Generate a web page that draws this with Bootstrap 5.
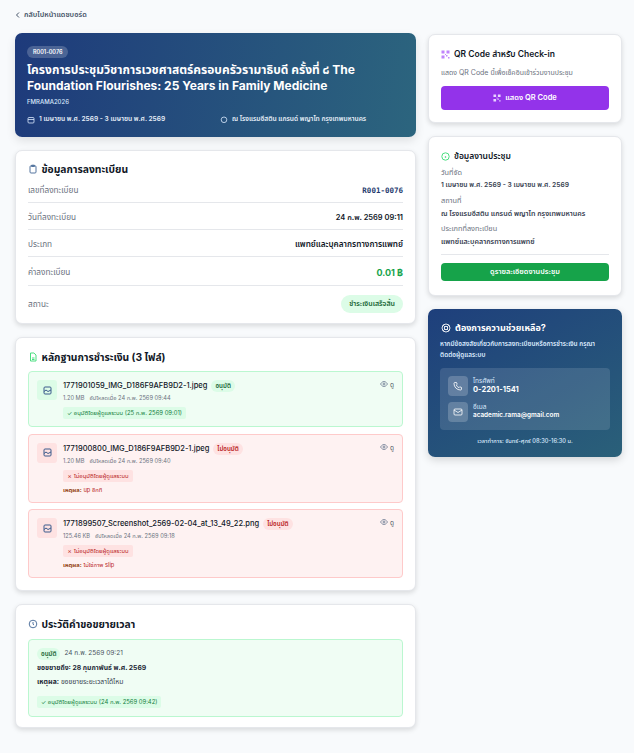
<!DOCTYPE html>
<html lang="th">
<head>
    <meta charset="UTF-8">
    <meta name="viewport" content="width=device-width, initial-scale=1.0">
    <title>Registration</title>
    <link href="https://cdn.jsdelivr.net/npm/bootstrap@5.3.3/dist/css/bootstrap.min.css" rel="stylesheet" crossorigin="anonymous">
    <script src="https://cdn.jsdelivr.net/npm/bootstrap@5.3.3/dist/js/bootstrap.bundle.min.js" crossorigin="anonymous"></script>
    <style>
        body { background: #f8fafc; font-family: "Inter", "Noto Sans Thai", "Noto Sans", sans-serif; color: #111827; font-size: 8px; height: 753px; overflow: hidden; }
        .page-wrap { padding: 4px 11px 0 15px; }
        .back-link { font-size: 7.3px; font-weight: 600; color: #475569; height: 22px; gap: 4px; margin-bottom: 7px; }
        .left-col { width: 401px; flex: none; }
        .right-col { width: 194px; flex: none; padding-top: 1px; }
        .columns { gap: 12px; }
        .stack-l { gap: 13px; }
        .stack-r { gap: 13px; }
        .hero { height: 104px; border-radius: 7px; background: linear-gradient(100deg, #1e3a7b, #2c657e); color: #fff; padding: 12px 12px; box-shadow: 0 4px 10px rgba(0,0,0,.1); }
        .hero-tag { background: rgba(255,255,255,.2); border-radius: 8px; font-size: 5.5px; font-weight: 600; padding: 0 6px; height: 12px; display: inline-flex; align-items: center; }
        .hero-title { font-size: 12px; font-weight: 700; line-height: 16px; margin: 4px 0 3px; }
        .hero-code { font-size: 6px; font-weight: 500; color: #dbeafe; margin-bottom: 9px; }
        .hero-meta { font-size: 6.6px; font-weight: 600; color: #e5edf7; }
        .hero-meta > div { gap: 4px; }
        .hero-meta > div:first-child { width: 193px; }
        .panel { background: #fff; border: 1px solid #e5e7eb; border-radius: 7px; box-shadow: 0 2px 5px rgba(0,0,0,.13); }
        .panel-reg { height: 174px; padding: 11px 12px; }
        .panel-files { height: 254px; padding: 12px 12px; }
        .panel-hist { height: 124px; padding: 12px; }
        .sec-title { font-size: 10.3px; font-weight: 700; gap: 3.5px; color: #111827; line-height: 14px; }
        .info-row { border-bottom: 1px solid #e5e7eb; font-size: 8.2px; color: #6b7280; height: 27px; padding-top: 3px; }
        .info-row.row-fee { height: 29px; }
        .info-row:last-child { border: 0; height: 36px; padding-top: 0; }
        .info-row strong { color: #111827; font-weight: 600; }
        .info-row .date-val { font-size: 7.5px; }
        .mono-val { font-family: "DejaVu Sans Mono", monospace; font-size: 7.5px; color: #1e3a6e; font-weight: 700; }
        .info-row .fee-val { color: #16a34a; font-size: 9px; font-weight: 700; }
        .paid-pill { background: #dcfce7; color: #166534; font-size: 7px; font-weight: 600; border-radius: 9px; padding: 0 8px; height: 18px; display: inline-flex; align-items: center; }
        .file-head { margin-bottom: 7px; }
        .file-stack { gap: 6.5px; }
        .file-box { border-radius: 4px; border: 1px solid; padding: 8px 8px 7px 8px; gap: 6px; }
        .file-ok { background: #f0fdf4; border-color: #bbf7d0; }
        .file-bad { background: #fef2f2; border-color: #fecaca; }
        .file-thumb { width: 20px; height: 20px; flex: none; border-radius: 3px; display: flex; align-items: center; justify-content: center; }
        .file-ok .file-thumb { background: #dcfce7; }
        .file-bad .file-thumb { background: #fee2e2; }
        .file-name { font-size: 7.5px; font-weight: 500; color: #111827; line-height: 12px; }
        .state-pill { font-size: 6.2px; font-weight: 600; border-radius: 6px; padding: 0 4px; height: 12px; display: inline-flex; align-items: center; margin-left: 4px; }
        .pill-ok { background: #dcfce7; color: #166534; }
        .pill-bad { background: #fee2e2; color: #b91c1c; }
        .file-sub { font-size: 5.7px; color: #6b7280; margin-top: 2px; gap: 5px; line-height: 8px; }
        .review-tag { display: block; width: fit-content; font-size: 5.9px; line-height: 8px; border-radius: 2px; padding: 2px 4px; margin-top: 5px; }
        .tag-ok { background: #dcfce7; color: #15803d; }
        .tag-bad { background: #fee2e2; color: #b91c1c; }
        .reason-line { font-size: 5.8px; line-height: 8px; color: #b91c1c; margin: 4px 0 1px; }
        .reason-line b { color: #92400e; }
        .view-link { font-size: 6.5px; color: #4b5563; gap: 2px; line-height: 10px; }
        .hist-box { background: #f0fdf4; border: 1px solid #bbf7d0; border-radius: 4px; padding: 8px 8px; height: 78px; }
        .hist-date { font-size: 6.5px; color: #4b5563; margin-left: 4px; }
        .hist-line { font-size: 6.8px; color: #374151; margin-top: 6px; line-height: 8px; }
        .hist-line.first-line { margin-top: 4px; }
        .hist-line b { font-weight: 700; color: #1f2937; }
        .hist-box .review-tag { margin-top: 10px; }
        .panel-qr { height: 89px; padding: 13px 12px; }
        .panel-event { height: 160px; padding: 13px 12px; }
        .side-title { font-size: 8.5px; font-weight: 600; gap: 4px; line-height: 12px; }
        .qr-hint { font-size: 7px; color: #6b7280; margin: 8px 0 9px; line-height: 9px; }
        .btn-qr { background: #9333ea; color: #fff; font-size: 7.5px; font-weight: 600; height: 24px; border-radius: 4px; border: 0; padding: 0; gap: 4px; width: 100%; display: flex; align-items: center; justify-content: center; }
        .ev-label { font-size: 7.3px; color: #6b7280; margin-top: 6px; line-height: 9px; }
        .ev-val { font-size: 7.1px; font-weight: 600; color: #374151; margin-top: 4px; line-height: 9px; }
        .ev-val.date-val { font-size: 6.7px; }
        .ev-rule { border-top: 1px solid #e5e7eb; margin: 8px 0 8px; }
        .btn-detail { background: #16a34a; color: #fff; font-size: 7.3px; font-weight: 600; height: 18px; border-radius: 4px; border: 0; padding: 0; width: 100%; }
        .help-card { height: 148px; border-radius: 7px; background: linear-gradient(150deg, #1e3f7c, #2a6079); color: #fff; padding: 12px; box-shadow: 0 3px 8px rgba(0,0,0,.15); }
        .help-title { font-size: 9px; font-weight: 700; gap: 4px; line-height: 13px; padding-left: 1px; }
        .help-text { font-size: 6.4px; font-weight: 600; color: #dbeafe; margin: 5px 0 8px; line-height: 10.5px; }
        .contact-box { background: rgba(255,255,255,.12); border-radius: 4px; padding: 8px; height: 62px; gap: 6px; }
        .contact-row { gap: 5px; }
        .contact-icon { width: 20px; height: 20px; border-radius: 4px; background: rgba(255,255,255,.2); flex: none; display: flex; align-items: center; justify-content: center; }
        .contact-label { font-size: 6.5px; color: #dbeafe; line-height: 7px; }
        .contact-val { font-weight: 700; font-size: 7.5px; line-height: 10px; }
        .contact-mail { font-weight: 600; font-size: 6.4px; line-height: 9px; }
        .help-hours { font-size: 5.7px; font-weight: 500; color: #dbeafe; text-align: center; margin-top: 7px; }
    </style>
</head>
<body>
<div class="page-wrap">
    <div class="back-link d-flex align-items-center">
        <svg width="5" height="6" viewBox="0 0 5 6" fill="none" stroke="#475569" stroke-width="1"><path d="M4 .5 1.5 3 4 5.5"/></svg>
        <span>กลับไปหน้าแดชบอร์ด</span>
    </div>

    <div class="columns d-flex">
        <div class="left-col d-flex flex-column stack-l">
            <div class="hero">
                <span class="hero-tag">R001-0076</span>
                <div class="hero-title">โครงการประชุมวิชาการเวชศาสตร์ครอบครัวรามาธิบดี ครั้งที่ ๘ The Foundation Flourishes: 25 Years in Family Medicine</div>
                <div class="hero-code">FMRAMA2026</div>
                <div class="hero-meta d-flex">
                    <div class="d-flex align-items-center">
                        <svg width="8" height="8" viewBox="0 0 8 8" fill="none" stroke="#dbeafe" stroke-width=".8"><rect x="1" y="1.5" width="6" height="5.5" rx="1"/><path d="M1 3.5h6"/></svg>
                        <span>1 เมษายน พ.ศ. 2569 - 3 เมษายน พ.ศ. 2569</span>
                    </div>
                    <div class="d-flex align-items-center">
                        <svg width="8" height="8" viewBox="0 0 8 8" fill="none" stroke="#dbeafe" stroke-width=".8"><circle cx="4" cy="3.8" r="2.8"/></svg>
                        <span>ณ โรงแรมอีสติน แกรนด์ พญาไท กรุงเทพมหานคร</span>
                    </div>
                </div>
            </div>

            <div class="panel panel-reg">
                <div class="sec-title d-flex align-items-center">
                    <svg width="10" height="10" viewBox="0 0 10 10" fill="none" stroke="#54759f" stroke-width="1"><rect x="2" y="1.8" width="6" height="7.2" rx="1"/><path d="M3.6 1.2h2.8v1.3H3.6z" fill="#54759f"/></svg>
                    <span>ข้อมูลการลงทะเบียน</span>
                </div>
                <div class="info-row d-flex justify-content-between align-items-center"><span>เลขที่ลงทะเบียน</span><span class="mono-val">R001-0076</span></div>
                <div class="info-row d-flex justify-content-between align-items-center"><span>วันที่ลงทะเบียน</span><strong class="date-val">24 ก.พ. 2569 09:11</strong></div>
                <div class="info-row d-flex justify-content-between align-items-center"><span>ประเภท</span><strong>แพทย์และบุคลากรทางการแพทย์</strong></div>
                <div class="info-row row-fee d-flex justify-content-between align-items-center"><span>ค่าลงทะเบียน</span><strong class="fee-val">0.01 ฿</strong></div>
                <div class="info-row d-flex justify-content-between align-items-center"><span>สถานะ</span><span class="paid-pill">ชำระเงินเสร็จสิ้น</span></div>
            </div>

            <div class="panel panel-files">
                <div class="sec-title d-flex align-items-center file-head">
                    <svg width="10" height="10" viewBox="0 0 10 10" fill="none" stroke="#4ade80" stroke-width="1"><path d="M2.5 1h3.4L8 3v6H2.5z"/><path d="M4 6h2.5M4 7.5h2.5"/></svg>
                    <span>หลักฐานการชำระเงิน (3 ไฟล์)</span>
                </div>
                <div class="d-flex flex-column file-stack" id="file-list"></div>
            </div>

            <div class="panel panel-hist">
                <div class="sec-title d-flex align-items-center mb-2">
                    <svg width="10" height="10" viewBox="0 0 10 10" fill="none" stroke="#54759f" stroke-width="1"><circle cx="5" cy="5" r="3.8"/><path d="M5 3v2.2l1 .8"/></svg>
                    <span>ประวัติคำขอขยายเวลา</span>
                </div>
                <div class="hist-box">
                    <div class="d-flex align-items-center"><span class="state-pill pill-ok m-0">อนุมัติ</span><span class="hist-date">24 ก.พ. 2569 09:21</span></div>
                    <div class="hist-line first-line"><b>ขอขยายถึง: 28 กุมภาพันธ์ พ.ศ. 2569</b></div>
                    <div class="hist-line"><b>เหตุผล:</b> ขอขยายระยะเวลาได้ไหม</div>
                    <span class="review-tag tag-ok">✓ อนุมัติโดยผู้ดูแลระบบ (24 ก.พ. 2569 09:42)</span>
                </div>
            </div>
        </div>

        <div class="right-col d-flex flex-column stack-r">
            <div class="panel panel-qr">
                <div class="side-title d-flex align-items-center">
                    <svg width="9" height="9" viewBox="0 0 9 9" fill="#c084fc"><path d="M.5.5h3v3h-3zM5.5.5h3v3h-3zM.5 5.5h3v3h-3zM5 5h1.5v1.5H5zM7 7h1.5v1.5H7zM4 4h1v1H4z"/></svg>
                    <span>QR Code สำหรับ Check-in</span>
                </div>
                <div class="qr-hint">แสดง QR Code นี้เพื่อเช็คอินเข้าร่วมงานประชุม</div>
                <button class="btn-qr" type="button">
                    <svg width="8" height="8" viewBox="0 0 9 9" fill="#e9d5ff"><path d="M.5.5h3v3h-3zM5.5.5h3v3h-3zM.5 5.5h3v3h-3zM5 5h1.5v1.5H5zM7 7h1.5v1.5H7zM4 4h1v1H4z"/></svg>
                    <span>แสดง QR Code</span>
                </button>
            </div>

            <div class="panel panel-event">
                <div class="side-title d-flex align-items-center">
                    <svg width="9" height="9" viewBox="0 0 9 9" fill="none" stroke="#4ade80" stroke-width="1"><circle cx="4.5" cy="4.5" r="3.7"/><circle cx="4.5" cy="5" r=".5"/></svg>
                    <span>ข้อมูลงานประชุม</span>
                </div>
                <div class="ev-label">วันที่จัด</div>
                <div class="ev-val date-val">1 เมษายน พ.ศ. 2569 - 3 เมษายน พ.ศ. 2569</div>
                <div class="ev-label">สถานที่</div>
                <div class="ev-val">ณ โรงแรมอีสติน แกรนด์ พญาไท กรุงเทพมหานคร</div>
                <div class="ev-label">ประเภทที่ลงทะเบียน</div>
                <div class="ev-val">แพทย์และบุคลากรทางการแพทย์</div>
                <div class="ev-rule"></div>
                <button class="btn-detail" type="button">ดูรายละเอียดงานประชุม</button>
            </div>

            <div class="help-card">
                <div class="help-title d-flex align-items-center">
                    <svg width="10" height="10" viewBox="0 0 10 10" fill="none" stroke="#fff" stroke-width=".9"><circle cx="5" cy="5" r="4"/><circle cx="5" cy="5" r="1.7"/><path d="m2.2 2.2 1.6 1.6m2.4 2.4 1.6 1.6m0-5.6L6.2 3.8M3.8 6.2 2.2 7.8"/></svg>
                    <span>ต้องการความช่วยเหลือ?</span>
                </div>
                <div class="help-text">หากมีข้อสงสัยเกี่ยวกับการลงทะเบียนหรือการชำระเงิน กรุณาติดต่อผู้ดูแลระบบ</div>
                <div class="contact-box d-flex flex-column">
                    <div class="d-flex align-items-center contact-row">
                        <div class="contact-icon"><svg width="10" height="10" viewBox="0 0 10 10" fill="none" stroke="#fff" stroke-width=".8"><path d="M2 1.5h1.5l.7 1.8-.9.7a5 5 0 0 0 2.7 2.7l.7-.9 1.8.7V8a1 1 0 0 1-1 1A6.5 6.5 0 0 1 1 2.5a1 1 0 0 1 1-1z"/></svg></div>
                        <div><div class="contact-label">โทรศัพท์</div><div class="contact-val">0-2201-1541</div></div>
                    </div>
                    <div class="d-flex align-items-center contact-row">
                        <div class="contact-icon"><svg width="10" height="10" viewBox="0 0 10 10" fill="none" stroke="#fff" stroke-width=".8"><rect x="1" y="2" width="8" height="6" rx="1"/><path d="m1 3 4 2.5L9 3"/></svg></div>
                        <div><div class="contact-label">อีเมล</div><div class="contact-mail">academic.rama@gmail.com</div></div>
                    </div>
                </div>
                <div class="help-hours">เวลาทำการ: จันทร์-ศุกร์ 08:30-16:30 น.</div>
            </div>
        </div>
    </div>
</div>

<script type="text/javascript">
    // Payment proof files
    const files = [
        { name: '1771901059_IMG_D186F9AFB9D2-1.jpeg', ok: true, size: '1.20 MB', at: '24 ก.พ. 2569 09:44', review: '✓ อนุมัติโดยผู้ดูแลระบบ (25 ก.พ. 2569 09:01)' },
        { name: '1771900800_IMG_D186F9AFB9D2-1.jpeg', ok: false, size: '1.20 MB', at: '24 ก.พ. 2569 09:40', review: '✗ ไม่อนุมัติโดยผู้ดูแลระบบ', reason: 'up อีกที' },
        { name: '1771899507_Screenshot_2569-02-04_at_13_49_22.png', ok: false, size: '125.46 KB', at: '24 ก.พ. 2569 09:18', review: '✗ ไม่อนุมัติโดยผู้ดูแลระบบ', reason: 'ไม่ใช่ภาพ slip' }
    ];

    const list = document.getElementById('file-list');
    files.forEach(file => {
        const row = document.createElement('div');
        row.className = `file-box d-flex ${file.ok ? 'file-ok' : 'file-bad'}`;
        row.innerHTML = `
            <div class="file-thumb"><svg width="9" height="9" viewBox="0 0 9 9" fill="none" stroke="#3b5a8c" stroke-width="1"><rect x="1" y="1" width="7" height="7" rx="1"/><path d="m1 5.5 2-1.5 2 1.5 3-1.5"/></svg></div>
            <div class="flex-grow-1">
                <div class="d-flex align-items-center"><span class="file-name">${file.name}</span><span class="state-pill ${file.ok ? 'pill-ok' : 'pill-bad'}">${file.ok ? 'อนุมัติ' : 'ไม่อนุมัติ'}</span></div>
                <div class="file-sub d-flex"><span>${file.size}</span><span>อัปโหลดเมื่อ ${file.at}</span></div>
                <span class="review-tag ${file.ok ? 'tag-ok' : 'tag-bad'}">${file.review}</span>
                ${file.reason ? `<div class="reason-line"><b>เหตุผล:</b> ${file.reason}</div>` : ''}
            </div>
            <div class="view-link d-flex align-items-start"><svg width="8" height="8" viewBox="0 0 8 8" fill="none" stroke="#64748b" stroke-width=".8"><path d="M.5 4S2 1.5 4 1.5 7.5 4 7.5 4 6 6.5 4 6.5.5 4 .5 4z"/><circle cx="4" cy="4" r="1"/></svg><span>ดู</span></div>
        `;
        list.appendChild(row);
    });
</script>
</body>
</html>
